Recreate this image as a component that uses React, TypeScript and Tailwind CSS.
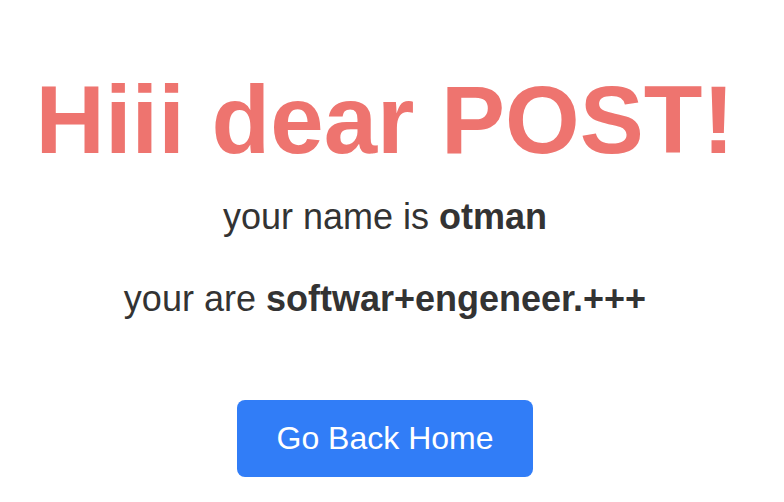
export default function App() {
  return (
    <main className="flex min-h-screen flex-col items-center bg-white pt-16 pr-3.5 font-['Liberation_Sans',Arial,sans-serif] text-4xl leading-[42px] text-[#333333]">
      <h1 className="text-center text-8xl leading-[112px] font-bold whitespace-nowrap text-[#ee746f]">Hiii dear POST!</h1>
      <p className="mt-5">
        your name is <strong>otman</strong>
      </p>
      <p className="mt-10">
        your are <strong>softwar+engeneer.+++</strong>
      </p>
      <a href="/" className="mt-20 rounded-lg bg-[#317df7] px-10 py-5 text-[32px] leading-[37px] text-white">
        Go Back Home
      </a>
    </main>
  );
}
